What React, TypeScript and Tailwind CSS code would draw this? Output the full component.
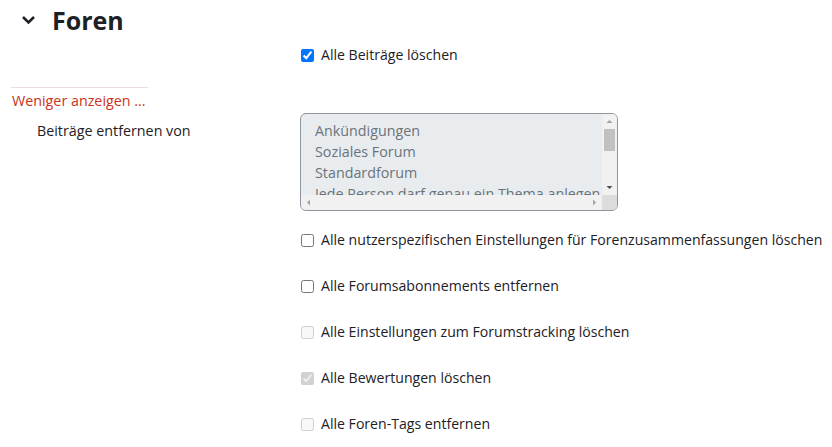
import React from "react";

const font = { fontFamily: '"Open Sans", "Noto Sans", sans-serif' };

const options = [
    "Ankündigungen",
    "Soziales Forum",
    "Standardforum",
    "Jede Person darf genau ein Thema anlegen",
];

const Check = ({ label, checked, disabled }: { label: string; checked?: boolean; disabled?: boolean }) => (
    <label className="flex items-center h-[22px] gap-[7px] whitespace-nowrap">
        <input
            type="checkbox"
            defaultChecked={checked}
            disabled={disabled}
            className="w-[13px] h-[13px] shrink-0"
        />
        <span>{label}</span>
    </label>
);

const ForumSelect = () => (
    <div className="flex flex-col shrink-0 w-[318px] h-[98px] border border-[#8f959e] rounded-[6px] overflow-hidden bg-[#e9ecef]">
        <div className="flex flex-1 min-h-0">
            <div className="flex flex-col flex-1 overflow-hidden pl-[14px] pt-[6px] text-[#6a737b] text-[14.3px] leading-[21px] whitespace-nowrap">
                {options.map((o) => (
                    <span key={o}>{o}</span>
                ))}
            </div>
            <div className="flex flex-col items-center w-[15px] bg-[#f1f1f1]">
                <svg width="15" height="15" viewBox="0 0 15 15">
                    <path d="M4.5 9 L7.5 6 L10.5 9 Z" fill="#a3a3a3" />
                </svg>
                <div className="w-[15px] h-[22px] px-[2px]">
                    <div className="w-full h-full bg-[#c1c1c1]" />
                </div>
                <div className="flex-1" />
                <svg width="15" height="15" viewBox="0 0 15 15">
                    <path d="M4.5 6 L7.5 9 L10.5 6 Z" fill="#505050" />
                </svg>
            </div>
        </div>
        <div className="flex h-[15px] bg-[#f1f1f1]">
            <svg width="15" height="15" viewBox="0 0 15 15">
                <path d="M9 4.5 L6 7.5 L9 10.5 Z" fill="#a3a3a3" />
            </svg>
            <div className="flex-1" />
            <svg width="15" height="15" viewBox="0 0 15 15">
                <path d="M6 4.5 L9 7.5 L6 10.5 Z" fill="#a3a3a3" />
            </svg>
            <div className="w-[15px] h-[15px] bg-[#dcdcdc]" />
        </div>
    </div>
);

export default function App() {
    return (
        <div className="w-[832px] h-[447px] bg-white text-[14.1px] text-[#1d2125] overflow-hidden" style={font}>
            <div className="flex items-center h-[40px] pl-[21px] gap-[16px]">
                <svg width="15" height="10" viewBox="0 0 15 10">
                    <polyline points="2,2 7.5,7.5 13,2" fill="none" stroke="#1d2125" strokeWidth="2.6" />
                </svg>
                <h3 className="text-[25px] font-bold leading-none">Foren</h3>
            </div>
            <div className="flex flex-col">
                <div className="flex mt-[4px]">
                    <div className="w-[301px] shrink-0" />
                    <Check label="Alle Beiträge löschen" checked />
                </div>
                <div className="flex flex-col w-[300px] pl-[11px] mt-[21px]">
                    <div className="w-[137px] h-px bg-[#eedcdc]" />
                    <a className="text-[#ca3120] text-[14.3px] leading-[22px] mt-[2px] pl-[1px]">Weniger anzeigen ...</a>
                </div>
                <div className="flex mt-[1px]">
                    <div className="w-[300px] shrink-0 pl-[37px] pt-[7px] text-[14.3px] leading-[22px]">Beiträge entfernen von</div>
                    <ForumSelect />
                </div>
                <div className="flex mt-[18px]">
                    <div className="w-[301px] shrink-0" />
                    <div className="flex flex-col gap-[24px]">
                        <Check label="Alle nutzerspezifischen Einstellungen für Forenzusammenfassungen löschen" />
                        <Check label="Alle Forumsabonnements entfernen" />
                        <Check label="Alle Einstellungen zum Forumstracking löschen" disabled />
                        <Check label="Alle Bewertungen löschen" checked disabled />
                        <Check label="Alle Foren-Tags entfernen" disabled />
                    </div>
                </div>
            </div>
        </div>
    );
}
